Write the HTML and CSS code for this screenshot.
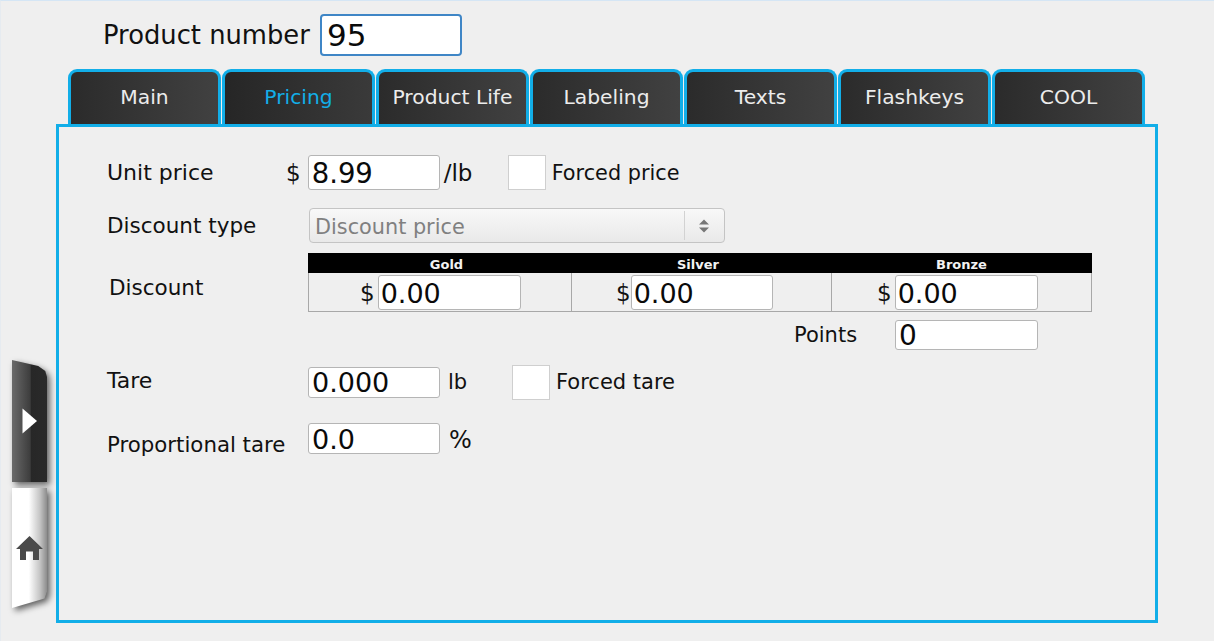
FILE: index.html
```html
<!DOCTYPE html>
<html lang="en">
<head>
<meta charset="utf-8">
<title>Product</title>
<link rel="stylesheet" href="styles.css">
</head>
<body>
<div class="page">
  <header class="product-row">
    <label class="product-label">Product number</label>
    <div class="field product-field">95</div>
  </header>
  <nav class="tabs">
    <div class="tab">Main</div>
    <div class="tab active">Pricing</div>
    <div class="tab">Product Life</div>
    <div class="tab">Labeling</div>
    <div class="tab">Texts</div>
    <div class="tab">Flashkeys</div>
    <div class="tab">COOL</div>
  </nav>
  <main class="panel">
    <div class="row row-unit">
      <span class="label label-unit">Unit price</span>
      <span class="currency">$</span>
      <div class="field price-field">8.99</div>
      <span class="unit unit-lb">/lb</span>
      <span class="check"></span>
      <span class="label label-forced">Forced price</span>
    </div>
    <div class="row row-type">
      <span class="label label-wide">Discount type</span>
      <div class="select">
        <span class="select-text">Discount price</span>
        <span class="select-arrows">
          <svg width="10" height="14" viewBox="0 0 10 14"><path d="M5 0.5 L10 5.5 H0 Z M0 8.5 H10 L5 13.5 Z" fill="#777"/></svg>
        </span>
      </div>
    </div>
    <div class="row row-discount">
      <span class="label label-discount">Discount</span>
      <div class="tiers">
        <div class="tier-head tier-head-gold">Gold</div>
        <div class="tier-head tier-head-silver">Silver</div>
        <div class="tier-head">Bronze</div>
        <div class="tier-cell tier-gold"><span class="currency">$</span><div class="field tier-field">0.00</div></div>
        <div class="tier-cell tier-silver"><span class="currency">$</span><div class="field tier-field">0.00</div></div>
        <div class="tier-cell tier-bronze"><span class="currency">$</span><div class="field tier-field">0.00</div></div>
      </div>
    </div>
    <div class="row row-points">
      <span class="label label-points">Points</span>
      <div class="field points-field">0</div>
    </div>
    <div class="row row-tare">
      <span class="label label-wide label-tare">Tare</span>
      <div class="field tare-field">0.000</div>
      <span class="unit unit-tare">lb</span>
      <span class="check check-tare"></span>
      <span class="label label-forced-tare">Forced tare</span>
    </div>
    <div class="row row-prop">
      <span class="label label-wide label-prop">Proportional tare</span>
      <div class="field tare-field">0.0</div>
      <span class="unit unit-percent">%</span>
    </div>
  </main>
  <div class="side">
    <button class="side-btn side-dark" aria-label="Next">
      <svg width="16" height="26" viewBox="0 0 16 26"><path d="M0.5 0.5 L15 13 L0.5 25.5 Z" fill="#fff"/></svg>
    </button>
    <button class="side-btn side-light" aria-label="Home">
      <svg width="27" height="24" viewBox="0 0 27 24"><path d="M13.5 0 L27 13 H23 V24 H17 V15.5 H10 V24 H4 V13 H0 Z" fill="#4a4a4a"/></svg>
    </button>
  </div>
</div>
</body>
</html>
```
FILE: styles.css
```css
* { box-sizing: border-box; }
html, body { margin: 0; padding: 0; }
body {
  width: 1214px;
  height: 641px;
  overflow: hidden;
  background: #efefef;
  color: #111;
  font-family: "DejaVu Sans", Verdana, sans-serif;
}
.page {
  position: relative;
  width: 1214px;
  height: 641px;
  border-top: 1px solid #d5e6f5;
  border-left: 1px solid #e6ebf0;
  padding-top: 13px;
}
.product-row {
  display: flex;
  align-items: center;
  height: 42px;
  padding-left: 102px;
}
.product-label {
  font-size: 25.8px;
  width: 217px;
  white-space: nowrap;
}
.field {
  background: #fff;
  border: 1px solid #b5b5b5;
  border-radius: 3px;
  color: #0a0a0a;
  padding-left: 3px;
  display: flex;
  align-items: center;
  font-family: "DejaVu Sans", Verdana, sans-serif;
}
.product-field {
  width: 142px;
  height: 42px;
  border: 2px solid #3f86c6;
  border-radius: 4px;
  font-size: 31px;
  padding-left: 5px;
}
.tabs {
  display: flex;
  gap: 1px;
  margin: 13px 0 0 67px;
  height: 55px;
}
.tab {
  width: 153px;
  height: 55px;
  padding-bottom: 3px;
  border: 3px solid #12aee8;
  border-bottom: 0;
  border-radius: 9px 9px 0 0;
  background: linear-gradient(90deg, #2b2b2b, #414141);
  color: #ececec;
  font-size: 20.3px;
  display: flex;
  align-items: center;
  justify-content: center;
  white-space: nowrap;
}
.tab.active {
  color: #12aee8;
  background: linear-gradient(90deg, #262626, #3a3a3a);
}
.panel {
  width: 1102px;
  height: 499px;
  margin-left: 55px;
  border: 3px solid #12aee8;
  padding: 28px 0 0 48px;
  position: relative;
}
.row {
  display: flex;
  align-items: center;
}
.label {
  font-size: 21.5px;
  white-space: nowrap;
}
.label-unit { width: 179px; font-size: 22px; }
.label-wide { width: 201px; }
.label-forced { font-size: 20.8px; }
.label-forced-tare { font-size: 21px; }
.label-tare { margin-top: -4px; font-size: 22px; }
.label-prop { margin-top: 12px; font-size: 21.3px; }
.currency {
  font-size: 23px;
  white-space: nowrap;
}
.unit {
  font-size: 22px;
  white-space: nowrap;
}
.row-unit { height: 35px; }
.price-field {
  width: 132px;
  height: 35px;
  font-size: 27.5px;
  margin-left: 7px;
  padding-top: 1px;
}
.unit-lb { width: 64px; margin-left: 4px; font-size: 23px; }
.check {
  width: 38px;
  height: 35px;
  background: #fff;
  border: 1px solid #cfcfcf;
  margin-right: 6px;
  flex: none;
}
.row-type { height: 35px; margin-top: 18px; }
.select {
  width: 416px;
  height: 35px;
  margin-left: 1px;
  border: 1px solid #c4c4c4;
  border-radius: 4px;
  background: linear-gradient(180deg, #f8f8f8, #e9e9e9);
  display: flex;
  align-items: center;
  justify-content: space-between;
}
.select-text {
  color: #808080;
  font-size: 20.8px;
  padding: 2px 0 0 5px;
}
.select-arrows {
  width: 40px;
  height: 29px;
  border-left: 1px solid #d2d2d2;
  display: flex;
  align-items: center;
  justify-content: center;
  padding-right: 2px;
}
.row-discount { margin-top: 10px; }
.label-discount { width: 199px; margin-left: 2px; margin-top: 10px; }
.tiers {
  width: 784px;
  display: grid;
  grid-template-columns: 263px 260px 261px;
  grid-template-rows: 20px 38px;
  border-bottom: 1px solid #a8a8a8;
}
.tier-head {
  background: #000;
  color: #f2f2f2;
  font-size: 13px;
  font-weight: 700;
  display: flex;
  align-items: flex-end;
  justify-content: center;
  line-height: 16px;
}
.tier-head-gold { padding-left: 14px; }
.tier-head-silver { padding-right: 6px; }
.tier-cell {
  display: flex;
  align-items: center;
  gap: 3px;
  padding-top: 1px;
  border-left: 1px solid #a8a8a8;
}
.tier-gold { padding-left: 51px; }
.tier-silver { padding-left: 44px; gap: 0; }
.tier-bronze { padding-left: 45px; border-right: 1px solid #a8a8a8; }
.tier-field {
  width: 143px;
  height: 35px;
  font-size: 27px;
  padding: 1px 0 0 2px;
}
.tier-silver .tier-field { width: 142px; }
.row-points { margin-top: 8px; padding-left: 687px; height: 30px; }
.label-points { width: 101px; font-size: 21px; }
.points-field {
  width: 143px;
  height: 30px;
  font-size: 28px;
  padding-top: 1px;
}
.row-tare { margin-top: 16px; height: 32px; }
.tare-field {
  width: 132px;
  height: 31px;
  font-size: 27px;
  padding-top: 1px;
}
.unit-tare { width: 64px; margin-left: 8px; font-size: 21px; }
.unit-percent { margin-left: 9px; margin-top: 2px; font-size: 24px; }
.row-prop { margin-top: 25px; height: 31px; }
.side {
  position: absolute;
  left: 11px;
  top: 359px;
  display: flex;
  flex-direction: column;
  gap: 6px;
  filter: drop-shadow(3px 3px 3px rgba(0, 0, 0, 0.6));
}
.side-btn {
  width: 35px;
  border: 0;
  padding: 0;
  display: flex;
  align-items: center;
  justify-content: center;
}
.side-dark {
  height: 122px;
  background: linear-gradient(90deg, #6a6a6a 0%, #3d3d3d 52%, #272727 55%, #2a2a2a 100%);
  clip-path: polygon(0 0, 75% 5%, 95% 9%, 100% 14%, 100% 100%, 0 100%);
}
.side-light {
  height: 120px;
  background: linear-gradient(90deg, #fff 0%, #fff 48%, #c4c4c4 80%, #8c8c8c 100%);
  clip-path: polygon(0 0, 100% 0, 100% 86%, 93% 92%, 0 100%);
}
```
